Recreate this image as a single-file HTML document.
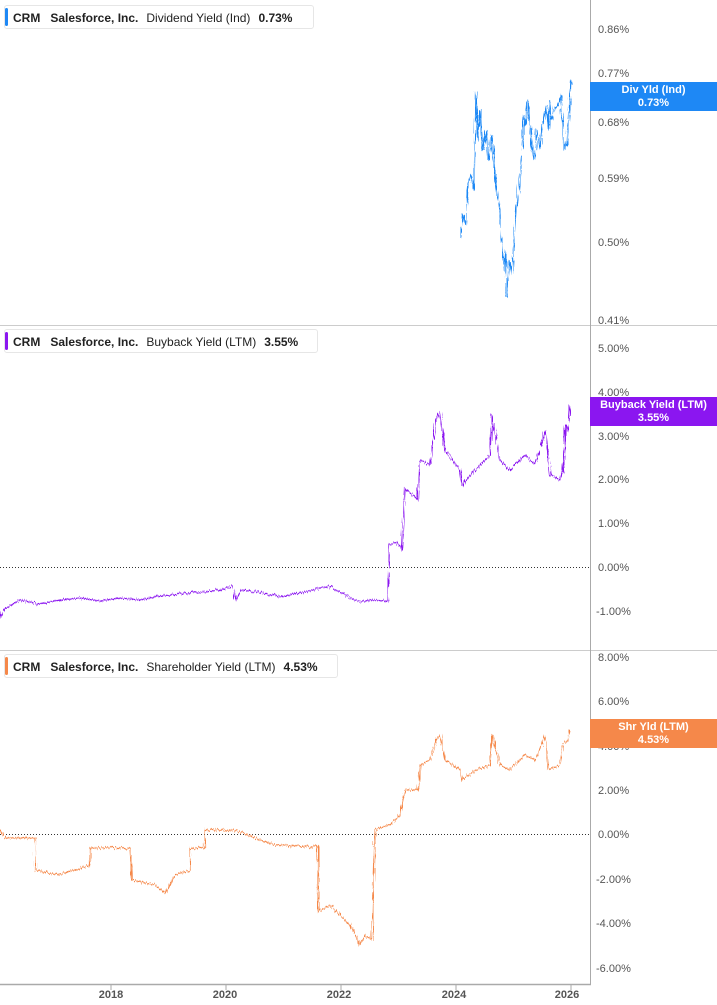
<!DOCTYPE html><html><head><style>
body{margin:0;width:717px;height:1005px;background:#fff;font-family:"Liberation Sans",sans-serif;overflow:hidden;position:relative}
.leg{position:absolute;left:4px;height:24px;border:1px solid #e6e6e6;border-radius:3px;background:#fff;font-size:12px;color:#222;line-height:24px;padding-left:8px;padding-right:10px;white-space:nowrap;box-sizing:border-box}
.leg i{position:absolute;left:0;top:2px;bottom:2px;width:3px;border-radius:2px}
.leg b{margin-right:10px}.leg span{margin-right:8px}
.tag{position:absolute;left:590px;width:127px;height:29px;color:#fff;font-size:11px;font-weight:bold;text-align:center;line-height:13px;padding-top:2px;box-sizing:border-box}
svg text{font-family:"Liberation Sans",sans-serif;font-size:11px;fill:#555}
</style></head><body>
<svg width="717" height="1005" style="position:absolute;left:0;top:0">
<defs><filter id="j" x="-5%" y="-5%" width="110%" height="110%"><feTurbulence type="fractalNoise" baseFrequency="0.9 0.05" numOctaves="2" seed="3"/><feDisplacementMap in="SourceGraphic" scale="6" xChannelSelector="R" yChannelSelector="G"/></filter></defs>
<g stroke="#ccc" stroke-width="1"><line x1="0" y1="325.5" x2="717" y2="325.5"/><line x1="0" y1="650.5" x2="717" y2="650.5"/></g>
<line x1="590.5" y1="0" x2="590.5" y2="985" stroke="#aaa"/>
<line x1="0" y1="984.5" x2="591" y2="984.5" stroke="#aaa" stroke-width="1.5"/>
<g stroke="#aaa"><line x1="111" y1="985" x2="111" y2="990"/><line x1="226" y1="985" x2="226" y2="990"/><line x1="341" y1="985" x2="341" y2="990"/><line x1="456" y1="985" x2="456" y2="990"/><line x1="571" y1="985" x2="571" y2="990"/></g>
<g font-weight="bold" text-anchor="middle" style="font-size:13px"><text x="111" y="998">2018</text><text x="225" y="998">2020</text><text x="339" y="998">2022</text><text x="454" y="998">2024</text><text x="567" y="998">2026</text></g>
<g><text x="598" y="33">0.86%</text><text x="598" y="77">0.77%</text><text x="598" y="126">0.68%</text><text x="598" y="182">0.59%</text><text x="598" y="246">0.50%</text><text x="598" y="324">0.41%</text>
<text x="598" y="352">5.00%</text><text x="598" y="396">4.00%</text><text x="598" y="440">3.00%</text><text x="598" y="483">2.00%</text><text x="598" y="527">1.00%</text><text x="598" y="571">0.00%</text><text x="596" y="615">-1.00%</text>
<text x="598" y="661">8.00%</text><text x="598" y="705">6.00%</text><text x="598" y="750">4.00%</text><text x="598" y="794">2.00%</text><text x="598" y="838">0.00%</text><text x="596" y="883">-2.00%</text><text x="596" y="927">-4.00%</text><text x="596" y="972">-6.00%</text></g>
<line x1="0" y1="567.5" x2="590" y2="567.5" stroke="#333" stroke-dasharray="1,2"/>
<line x1="0" y1="834.5" x2="590" y2="834.5" stroke="#333" stroke-dasharray="1,2"/>
<polyline filter="url(#j)" fill="none" stroke="#1e88f5" stroke-width="1.2" points="461,238 463,215 466,225 468,185 471,175 474,190 476,92 478,140 480,110 483,150 486,130 489,160 492,135 495,175 498,200 500,215 502,245 504,270 506,250 507,297 508,280 510,260 512,275 514,240 516,210 518,195 520,175 522,150 524,115 526,125 528,100 531,140 534,160 537,130 540,150 543,125 546,105 548,130 550,100 552,120 555,110 558,105 561,95 564,150 567,145 569,115 571,80"/>
<polyline filter="url(#j)" fill="none" stroke="#8b16f0" stroke-width="1.2" points="0,618 5,608 20,600 40,604 60,600 80,598 100,601 120,598 140,600 160,596 180,594 200,592 220,590 232,586 236,600 240,590 260,592 280,597 300,593 320,588 330,586 340,592 350,598 360,602 370,600 388,601 390,545 396,542 402,550 405,488 410,492 418,500 420,460 430,465 436,420 440,412 445,450 460,470 462,485 475,470 490,455 492,415 500,460 510,470 525,455 535,465 545,430 550,475 560,480 563,470 566,425 568,432 570,405"/>
<polyline filter="url(#j)" fill="none" stroke="#f5884a" stroke-width="1.2" points="0,828 5,838 35,838 35,870 60,875 90,865 90,848 130,848 132,880 155,885 165,893 175,875 190,870 190,848 205,848 205,830 235,830 260,840 275,845 318,847 318,912 330,905 340,915 350,925 355,935 360,945 365,935 372,940 375,830 390,825 400,815 405,790 418,790 420,765 430,760 436,740 440,735 445,760 460,770 462,780 475,770 490,765 492,735 500,765 510,770 525,755 535,760 545,735 548,770 560,765 563,745 568,740 570,730"/>
</svg>
<div class="leg" style="top:5px;width:310px"><i style="background:#1e88f5"></i><b>CRM</b><span style="font-weight:bold">Salesforce, Inc.</span><span>Dividend Yield (Ind)</span><b>0.73%</b></div>
<div class="leg" style="top:329px;width:314px"><i style="background:#8b16f0"></i><b>CRM</b><span style="font-weight:bold">Salesforce, Inc.</span><span>Buyback Yield (LTM)</span><b>3.55%</b></div>
<div class="leg" style="top:654px;width:334px"><i style="background:#f5884a"></i><b>CRM</b><span style="font-weight:bold">Salesforce, Inc.</span><span>Shareholder Yield (LTM)</span><b>4.53%</b></div>
<div class="tag" style="top:82px;background:#1e88f5">Div Yld (Ind)<br>0.73%</div>
<div class="tag" style="top:397px;background:#8b16f0">Buyback Yield (LTM)<br>3.55%</div>
<div class="tag" style="top:719px;background:#f5884a">Shr Yld (LTM)<br>4.53%</div>
</body></html>
